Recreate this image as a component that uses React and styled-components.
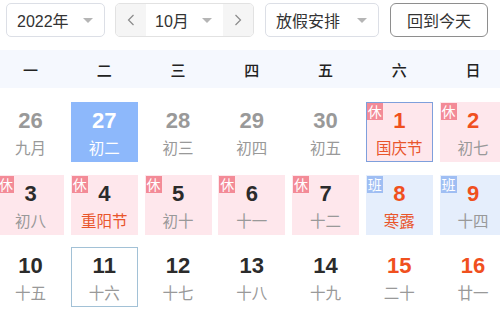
import React from "react";
import styled, { createGlobalStyle, css } from "styled-components";

const GlobalStyle = createGlobalStyle`
  html, body { margin: 0; padding: 0; overflow: hidden; background: #fff; }
  body { font-family: "Liberation Sans", "Noto Sans CJK SC", sans-serif; color: #333; }
  * { box-sizing: border-box; }
`;

const Page = styled.div`
  width: 500px;
  height: 310px;
  overflow: hidden;
`;

const Toolbar = styled.div`
  display: flex;
  align-items: center;
  padding: 3px 6px 0;
  height: 37px;
  gap: 10px;
`;

const Select = styled.div`
  width: ${(p) => p.$w}px;
  height: 34px;
  border: 1px solid #dcdfe6;
  border-radius: 5px;
  display: flex;
  align-items: center;
  justify-content: space-between;
  padding: 0 11px 0 10px;
  font-size: 16px;
  color: #333;
  background: #fff;
  margin-left: ${(p) => p.$ml || 0}px;
`;

const Caret = styled.span`
  width: 0;
  height: 0;
  border-left: 5px solid transparent;
  border-right: 5px solid transparent;
  border-top: 5px solid #b5b5b5;
`;

const MonthGroup = styled.div`
  width: 139px;
  height: 34px;
  border: 1px solid #e2e2e2;
  border-radius: 5px;
  display: flex;
  overflow: hidden;
`;

const Arrow = styled.div`
  width: 30px;
  background: #f5f5f5;
  display: flex;
  align-items: center;
  justify-content: center;
`;

const MonthCenter = styled.div`
  flex: 1;
  background: #fff;
  display: flex;
  align-items: center;
  justify-content: space-between;
  padding: 0 11px 0 9px;
  font-size: 16px;
  color: #333;
`;

const Button = styled.div`
  width: 98px;
  height: 34px;
  margin-left: 1px;
  border: 1px solid #8e8e8e;
  border-radius: 6px;
  display: flex;
  align-items: center;
  justify-content: center;
  font-size: 16px;
  color: #333;
  background: #fff;
`;

const WeekHeader = styled.div`
  margin-top: 13px;
  height: 38px;
  background: #f5f8fe;
`;

const Grid = styled.div`
  margin-left: -3px;
  width: 510px;
  display: grid;
  grid-template-columns: repeat(7, 67px);
  column-gap: 6.75px;
  row-gap: ${(p) => p.$rowGap || 0}px;
  height: 100%;
`;

const WeekDay = styled.div`
  display: flex;
  align-items: center;
  justify-content: center;
  font-size: 15px;
  font-weight: 500;
  color: #222;
  font-family: "Noto Sans CJK SC", sans-serif;
`;

const Body = styled.div`
  padding-top: 14px;
`;

const Cell = styled.div`
  position: relative;
  height: 60px;
  border: 1px solid transparent;
  display: flex;
  flex-direction: column;
  align-items: center;
  padding-top: 5px;
  background: #fff;
  ${(p) => p.$kind === "rest" && css`background: #fee7ec;`}
  ${(p) => p.$kind === "work" && css`background: #e5eefc;`}
  ${(p) => p.$selected && css`background: #8db8fb;`}
  ${(p) => p.$focus && css`border-color: #7e9fdc;`}
  ${(p) => p.$today && css`border-color: #a2c1d6;`}
`;

const Num = styled.div`
  font-size: 22px;
  line-height: 26px;
  font-weight: 700;
  color: ${(p) => p.$color};
`;

const Lunar = styled.div`
  margin-top: 3px;
  font-size: 15.5px;
  line-height: 20px;
  font-family: "Noto Sans CJK SC", sans-serif;
  color: ${(p) => p.$color};
`;

const Badge = styled.span`
  position: absolute;
  top: 0;
  left: 0;
  width: 16px;
  height: 17px;
  font-size: 14px;
  line-height: 17px;
  text-align: center;
  color: #fff;
  font-family: "Noto Sans CJK SC", sans-serif;
  background: ${(p) => (p.$type === "班" ? "#9fbef3" : "#f38b97")};
`;

const RED = "#f0501e";
const FEST = "#e9552b";
const DARK = "#2b2b2b";
const GRAY = "#999";

const Chevron = ({ dir }) => (
  <svg width="8" height="12" viewBox="0 0 8 12">
    <path
      d={dir === "left" ? "M6.5 1 L1.5 6 L6.5 11" : "M1.5 1 L6.5 6 L1.5 11"}
      fill="none"
      stroke="#8a8a8a"
      strokeWidth="1.2"
    />
  </svg>
);

const weekdays = ["一", "二", "三", "四", "五", "六", "日"];

const days = [
  { n: 26, l: "九月", other: true },
  { n: 27, l: "初二", other: true, selected: true },
  { n: 28, l: "初三", other: true },
  { n: 29, l: "初四", other: true },
  { n: 30, l: "初五", other: true },
  { n: 1, l: "国庆节", fest: true, red: true, badge: "休", focus: true },
  { n: 2, l: "初七", red: true, badge: "休" },
  { n: 3, l: "初八", badge: "休" },
  { n: 4, l: "重阳节", fest: true, badge: "休" },
  { n: 5, l: "初十", badge: "休" },
  { n: 6, l: "十一", badge: "休" },
  { n: 7, l: "十二", badge: "休" },
  { n: 8, l: "寒露", fest: true, red: true, badge: "班" },
  { n: 9, l: "十四", red: true, badge: "班" },
  { n: 10, l: "十五" },
  { n: 11, l: "十六", today: true },
  { n: 12, l: "十七" },
  { n: 13, l: "十八" },
  { n: 14, l: "十九" },
  { n: 15, l: "二十", red: true },
  { n: 16, l: "廿一", red: true },
];

export default function App() {
  return (
    <Page>
      <GlobalStyle />
      <Toolbar>
        <Select $w={99}>
          <span>2022年</span>
          <Caret />
        </Select>
        <MonthGroup>
          <Arrow><Chevron dir="left" /></Arrow>
          <MonthCenter>
            <span>10月</span>
            <Caret />
          </MonthCenter>
          <Arrow><Chevron dir="right" /></Arrow>
        </MonthGroup>
        <Select $w={114} $ml={1}>
          <span>放假安排</span>
          <Caret />
        </Select>
        <Button>回到今天</Button>
      </Toolbar>
      <WeekHeader>
        <Grid>
          {weekdays.map((w) => (
            <WeekDay key={w}>{w}</WeekDay>
          ))}
        </Grid>
      </WeekHeader>
      <Body>
        <Grid $rowGap={12.5}>
          {days.map((d, i) => {
            const kind = d.badge === "休" ? "rest" : d.badge === "班" ? "work" : "none";
            const numColor = d.selected ? "#fff" : d.other ? GRAY : d.red ? RED : DARK;
            const lunarColor = d.selected ? "#fff" : d.fest ? FEST : GRAY;
            return (
              <Cell
                key={i}
                $kind={kind}
                $selected={d.selected}
                $focus={d.focus}
                $today={d.today}
              >
                {d.badge && <Badge $type={d.badge}>{d.badge}</Badge>}
                <Num $color={numColor}>{d.n}</Num>
                <Lunar $color={lunarColor}>{d.l}</Lunar>
              </Cell>
            );
          })}
        </Grid>
      </Body>
    </Page>
  );
}
